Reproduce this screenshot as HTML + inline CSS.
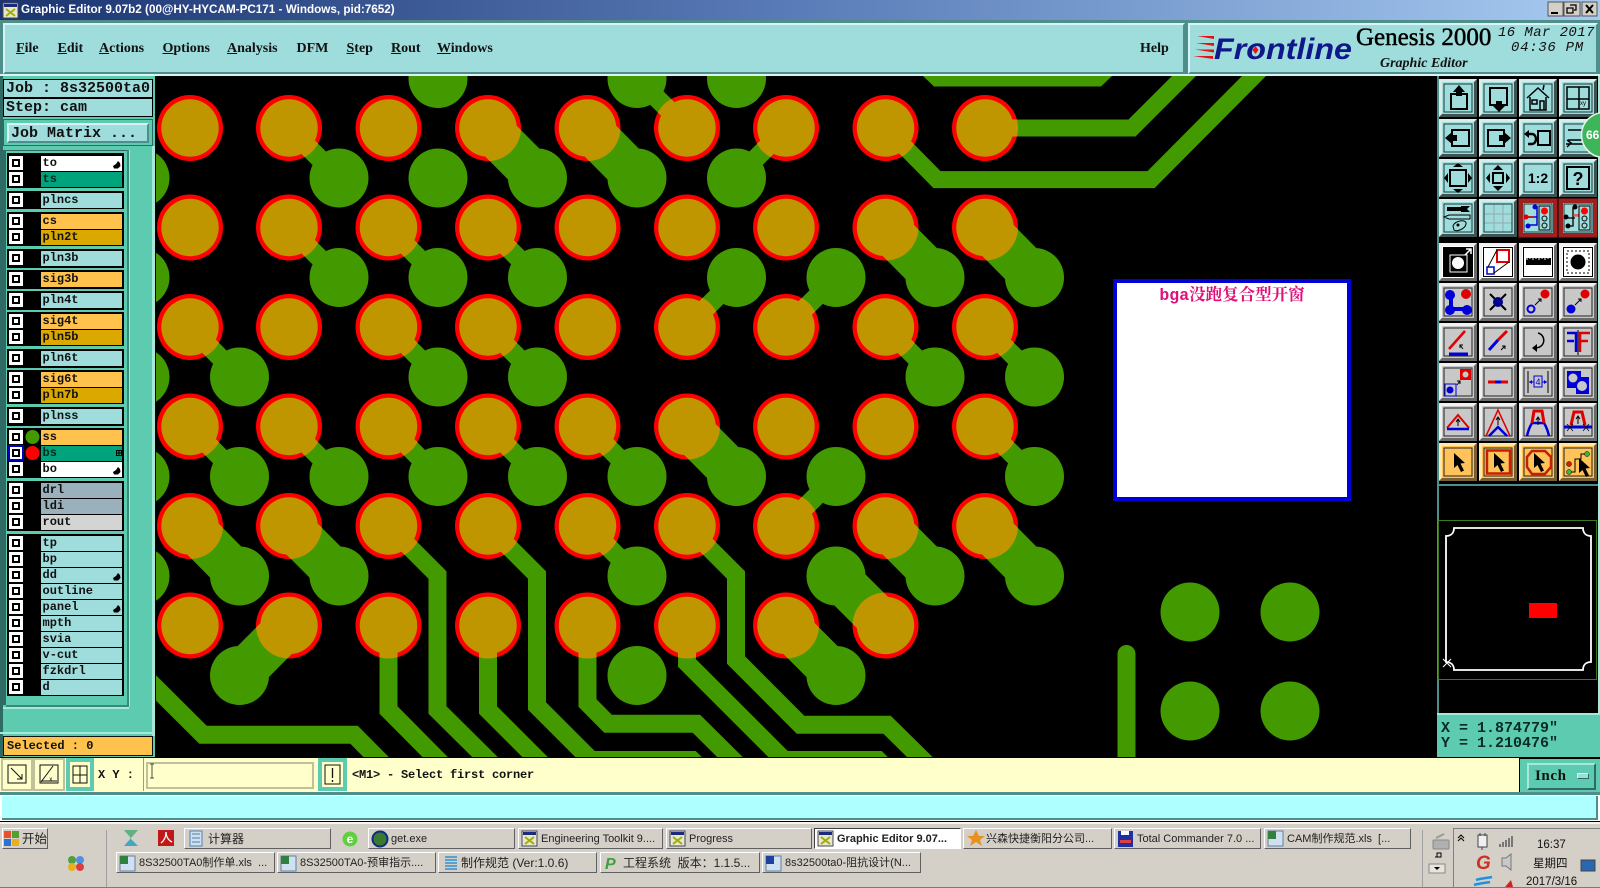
<!DOCTYPE html>
<html><head><meta charset="utf-8"><title>Graphic Editor</title>
<style>
html,body{margin:0;padding:0;width:1600px;height:887px;overflow:hidden;background:#4f8f8b}
*{box-sizing:border-box}
div,span{position:absolute}
u{text-decoration:underline}
.m{font:bold 14px "Liberation Serif","Noto Serif CJK SC",serif;color:#111;top:41px;white-space:pre}
.mono{font-family:"Liberation Mono","DejaVu Sans Mono",monospace;font-weight:bold;color:#111;white-space:pre}
.f{left:7px;width:117px;background:#000}
.l{left:41px;width:81px;height:14.5px;font:bold 12px/14px "Liberation Mono",monospace;color:#111;padding-left:1.5px;white-space:pre}
.cy{background:#9fdcdc}.or{background:#ffc24d}.go{background:#dba800}.gr{background:#00a37c;color:#022a20}.wh{background:#fff}.gb{background:#9ab0bc}.lg{background:#d4d4d4}
.c{left:9px;width:14px;height:14px;background:#fff}
.c i{position:absolute;display:block;left:3px;top:3px;width:8px;height:8px;background:#fff;box-shadow:0 0 0 0 #000;border:2px solid #000}
.t{height:21px;background:#d4d0c8;border:1px solid;border-color:#fff #606060 #606060 #fff;font:11px/20px "Liberation Sans","WenQuanYi Zen Hei","Noto Sans CJK SC",sans-serif;color:#222;white-space:pre;padding-left:22px;overflow:hidden}
.t2{font-size:12px}
.tr{font:11.5px "Liberation Sans","WenQuanYi Zen Hei",sans-serif;color:#111;white-space:pre}
</style></head><body>

<!-- PCB canvas -->
<div style="left:155px;top:76px;width:1282px;height:681px;background:#000"></div>
<svg width="1600" height="887" viewBox="0 0 1600 887" style="position:absolute;left:0;top:0">
<defs>
<clipPath id="cv"><rect x="156" y="76" width="1281" height="681"/></clipPath>
<g id="row33"><circle cx="190" r="33"/><circle cx="289" r="33"/><circle cx="388.5" r="33"/><circle cx="488" r="33"/><circle cx="587.5" r="33"/><circle cx="687" r="33"/><circle cx="786" r="33"/><circle cx="885.5" r="33"/></g>
<g id="row28"><circle cx="190" r="28.7"/><circle cx="289" r="28.7"/><circle cx="388.5" r="28.7"/><circle cx="488" r="28.7"/><circle cx="587.5" r="28.7"/><circle cx="687" r="28.7"/><circle cx="786" r="28.7"/><circle cx="885.5" r="28.7"/></g>
<g id="D33"><use href="#row33" y="128"/><use href="#row33" y="227.5"/><use href="#row33" y="327"/><use href="#row33" y="426.5"/><use href="#row33" y="526"/><use href="#row33" y="625.5"/><circle cx="985" cy="128" r="33"/><circle cx="985" cy="227.5" r="33"/><circle cx="985" cy="327" r="33"/><circle cx="985" cy="426.5" r="33"/><circle cx="985" cy="526" r="33"/></g>
<g id="D28"><use href="#row28" y="128"/><use href="#row28" y="227.5"/><use href="#row28" y="327"/><use href="#row28" y="426.5"/><use href="#row28" y="526"/><use href="#row28" y="625.5"/><circle cx="985" cy="128" r="28.7"/><circle cx="985" cy="227.5" r="28.7"/><circle cx="985" cy="327" r="28.7"/><circle cx="985" cy="426.5" r="28.7"/><circle cx="985" cy="526" r="28.7"/></g>
<circle id="p" r="29.5"/>
<g id="GP">
<use href="#p" x="438" y="78.5"/><use href="#p" x="637" y="78.5"/><use href="#p" x="736.5" y="78.5"/>
<use href="#p" x="140" y="178"/><use href="#p" x="339" y="178"/><use href="#p" x="438" y="178"/><use href="#p" x="537.5" y="178"/><use href="#p" x="637" y="178"/><use href="#p" x="736.5" y="178"/>
<use href="#p" x="140" y="277.5"/><use href="#p" x="339" y="277.5"/><use href="#p" x="438" y="277.5"/><use href="#p" x="537.5" y="277.5"/><use href="#p" x="736.5" y="277.5"/><use href="#p" x="836" y="277.5"/><use href="#p" x="935" y="277.5"/><use href="#p" x="1034.5" y="277.5"/>
<use href="#p" x="140" y="377"/><use href="#p" x="239.5" y="377"/><use href="#p" x="438" y="377"/><use href="#p" x="537.5" y="377"/><use href="#p" x="935" y="377"/><use href="#p" x="1034.5" y="377"/>
<use href="#p" x="140" y="476.5"/><use href="#p" x="239.5" y="476.5"/><use href="#p" x="339" y="476.5"/><use href="#p" x="438" y="476.5"/><use href="#p" x="537.5" y="476.5"/><use href="#p" x="637" y="476.5"/><use href="#p" x="736.5" y="476.5"/><use href="#p" x="836" y="476.5"/><use href="#p" x="1034.5" y="476.5"/>
<use href="#p" x="140" y="576"/><use href="#p" x="239.5" y="576"/><use href="#p" x="339" y="576"/><use href="#p" x="637" y="576"/><use href="#p" x="836" y="576"/><use href="#p" x="935" y="576"/><use href="#p" x="1034.5" y="576"/>
<use href="#p" x="239.5" y="675.5"/><use href="#p" x="637" y="675.5"/><use href="#p" x="836" y="675.5"/>
<use href="#p" x="1190" y="612"/><use href="#p" x="1290" y="612"/><use href="#p" x="1190" y="711"/><use href="#p" x="1290" y="711"/>
<polygon points="923,76 1112,76 1101,86.5 934,86.5"/>
</g>
<g id="GT" fill="none">
<path stroke-width="19" d="M289 128L339 178M786 128L736.5 178M687 128L637 78.5M388.5 227.5L438 277.5M488 227.5L537.5 277.5M289 227.5L339 277.5M190 327L239.5 377M388.5 327L438 377M488 327L537.5 377M687 327L736.5 277.5M786 327L836 277.5M885.5 327L935 377M985 327L1034.5 377M190 426.5L239.5 476.5M289 426.5L339 476.5M388.5 426.5L438 476.5M488 426.5L537.5 476.5M587.5 426.5L637 476.5M985 426.5L1034.5 476.5M587.5 526L637 576M786 526L836 476.5"/>
<path stroke-width="44" d="M488 128L537.5 178M587.5 128L637 178M885.5 227.5L935 277.5M985 227.5L1034.5 277.5M687 426.5L736.5 476.5M190 526L239.5 576M289 526L339 576M885.5 526L935 576M985 526L1034.5 576M289 625.5L239.5 675.5M786 625.5L836 675.5M885.5 625.5L836 576"/>
<path stroke-width="18" d="M150 682L203 734.7H354L382 763M388.5 625V710L445 767M488 625V710L545 767M388.5 526L437.5 575V710L495 767M488 526L537 575V706L591 760H692L712 780M587.5 625V703L608 723.7H696.4L745 772M687 625V663L784 760H878L895 777M687 526L736 575V660L800.5 724.7H887L935 772"/>
<path stroke-width="17" d="M886 128L937 179.6H1151L1260 70M985 128H1132L1190 70"/>
<path stroke-width="18" stroke-linecap="round" d="M1126.5 654V775"/>
</g>
<mask id="gm" maskUnits="userSpaceOnUse" x="0" y="0" width="1600" height="887"><use href="#GP" fill="#fff"/><use href="#GT" stroke="#fff"/></mask>
</defs>
<g clip-path="url(#cv)">
<use href="#D33" fill="#ff0000"/>
<use href="#GP" fill="#429900"/>
<use href="#GT" stroke="#429900"/>
<g mask="url(#gm)"><use href="#D33" fill="#bf9600"/></g>
<use href="#D28" fill="#bf9600"/>
</g>
</svg>

<!-- annotation box -->
<div style="left:1113px;top:279px;width:238px;height:222px;background:#fff;border:4px solid #0000d8"></div>
<div style="left:1113px;top:286px;width:238px;text-align:center;font:bold 16.5px/20px 'Liberation Mono','Noto Serif CJK SC',monospace;color:#e0107a">bga没跑复合型开窗</div>

<!-- title bar -->
<div style="left:0;top:0;width:1600px;height:20px;background:linear-gradient(90deg,#1b3470 0%,#5a7cb8 50%,#a6caf0 100%)"></div>
<div style="left:21px;top:1px;height:18px;font:bold 11.7px/18px 'Liberation Sans',sans-serif;color:#fff;white-space:pre">Graphic Editor 9.07b2 (00@HY-HYCAM-PC171 - Windows, pid:7652)</div>

<!-- menu bar -->
<div style="left:0;top:20px;width:1600px;height:56px;background:#4f8f8b"></div>
<div style="left:3px;top:23px;width:1182px;height:51px;background:#9fdcdc;border:2px solid;border-color:#d8f4f4 #4f8f8b #4f8f8b #d8f4f4"></div>
<div style="left:1188px;top:23px;width:410px;height:51px;background:#9fdcdc;border:2px solid;border-color:#d8f4f4 #4f8f8b #4f8f8b #d8f4f4"></div>
<div style="left:0;top:74px;width:1600px;height:2px;background:#d8f4f4"></div>
<div class="m" style="left:16px"><u>F</u>ile</div>
<div class="m" style="left:57.5px"><u>E</u>dit</div>
<div class="m" style="left:99px"><u>A</u>ctions</div>
<div class="m" style="left:162.5px"><u>O</u>ptions</div>
<div class="m" style="left:227px"><u>A</u>nalysis</div>
<div class="m" style="left:296.5px">DFM</div>
<div class="m" style="left:346.5px"><u>S</u>tep</div>
<div class="m" style="left:391px"><u>R</u>out</div>
<div class="m" style="left:437px"><u>W</u>indows</div>
<div class="m" style="left:1140px">Help</div>
<div style="left:1356px;top:23px;font:25px/30px 'Liberation Serif',serif;color:#000;white-space:pre;-webkit-text-stroke:.5px #000">Genesis 2000</div>
<div style="left:1380px;top:56px;font:italic bold 14px/16px 'Liberation Serif',serif;color:#111;white-space:pre">Graphic Editor</div>
<div class="mono" style="left:1498px;top:25px;font-size:14px;line-height:16px;font-style:italic;font-weight:normal;letter-spacing:.4px">16 Mar 2017</div>
<div class="mono" style="left:1511px;top:40px;font-size:14px;line-height:16px;font-style:italic;font-weight:normal;letter-spacing:.7px">04:36 PM</div>

<!-- left panel -->
<div style="left:0;top:76px;width:155px;height:681px;background:#5ccbb0"></div>
<div style="left:0;top:76px;width:3px;height:681px;background:#2d6b64"></div>
<div class="mono" style="left:3px;top:79px;width:150px;height:19px;background:#9fdcdc;border:1px solid #000;font-size:15px;line-height:17px;padding-left:2px">Job : 8s32500ta0</div>
<div class="mono" style="left:3px;top:98px;width:150px;height:19px;background:#9fdcdc;border:1px solid #000;font-size:15px;line-height:17px;padding-left:2px">Step: cam</div>
<div style="left:3px;top:119px;width:150px;height:27px;background:#5ccbb0;border:1px solid #2d6b64"></div>
<div class="mono" style="left:7px;top:123px;width:142px;height:20px;background:#9fdcdc;border:2px solid;border-color:#d8f4f4 #4f8f8b #4f8f8b #d8f4f4;font-size:15px;line-height:17px;padding-left:2px">Job Matrix ...</div>
<div style="left:3px;top:150px;width:3px;height:555px;background:#2d6b64"></div>
<div style="left:6px;top:150px;width:121px;height:1px;background:#2d6b64"></div>
<div style="left:126.5px;top:150px;width:2px;height:557px;background:#3a8a78"></div>
<div style="left:128.5px;top:150px;width:1.5px;height:557px;background:#a8e8d8"></div>
<div style="left:6px;top:705px;width:123px;height:2px;background:#3a8a78"></div>
<div style="left:3px;top:707px;width:126px;height:1.5px;background:#a8e8d8"></div>
<div style="left:152px;top:146px;width:3px;height:590px;background:#a8e8d8"></div>
<div style="left:0;top:732px;width:155px;height:2px;background:#a8e8d8"></div>

<div class="f" style="top:153px;height:35px"></div>
<div class="f" style="top:191px;height:18px"></div>
<div class="f" style="top:212px;height:34px"></div>
<div class="f" style="top:249px;height:18.5px"></div>
<div class="f" style="top:270px;height:18.5px"></div>
<div class="f" style="top:291px;height:18.5px"></div>
<div class="f" style="top:312px;height:34px"></div>
<div class="f" style="top:349px;height:18.5px"></div>
<div class="f" style="top:370px;height:34px"></div>
<div class="f" style="top:407px;height:18.5px"></div>
<div class="f" style="top:428px;height:50px"></div>
<div class="f" style="top:481px;height:50px"></div>
<div class="f" style="top:534px;height:162px"></div>

<div class="c" style="top:156px"><i></i></div><div class="l wh" style="top:156px">to</div>
<div class="c" style="top:172px"><i></i></div><div class="l gr" style="top:172px">ts</div>
<div class="c" style="top:193px"><i></i></div><div class="l cy" style="top:193px">plncs</div>
<div class="c" style="top:214px"><i></i></div><div class="l or" style="top:214px">cs</div>
<div class="c" style="top:230px"><i></i></div><div class="l go" style="top:230px">pln2t</div>
<div class="c" style="top:251px"><i></i></div><div class="l cy" style="top:251px">pln3b</div>
<div class="c" style="top:272px"><i></i></div><div class="l or" style="top:272px">sig3b</div>
<div class="c" style="top:293px"><i></i></div><div class="l cy" style="top:293px">pln4t</div>
<div class="c" style="top:314px"><i></i></div><div class="l or" style="top:314px">sig4t</div>
<div class="c" style="top:330px"><i></i></div><div class="l go" style="top:330px">pln5b</div>
<div class="c" style="top:351px"><i></i></div><div class="l cy" style="top:351px">pln6t</div>
<div class="c" style="top:372px"><i></i></div><div class="l or" style="top:372px">sig6t</div>
<div class="c" style="top:388px"><i></i></div><div class="l go" style="top:388px">pln7b</div>
<div class="c" style="top:409px"><i></i></div><div class="l cy" style="top:409px">plnss</div>
<div class="c" style="top:430px"><i></i></div><div class="l or" style="top:430px">ss</div>
<div class="c" style="top:446px;outline:2px solid #0000c0;outline-offset:-1px"><i></i></div><div class="l gr" style="top:446px">bs</div>
<div class="c" style="top:462px"><i></i></div><div class="l wh" style="top:462px">bo</div>
<div class="c" style="top:483px"><i></i></div><div class="l gb" style="top:483px">drl</div>
<div class="c" style="top:499px"><i></i></div><div class="l gb" style="top:499px">ldi</div>
<div class="c" style="top:515px"><i></i></div><div class="l lg" style="top:515px">rout</div>
<div class="c" style="top:536px"><i></i></div><div class="l cy" style="top:536px">tp</div>
<div class="c" style="top:552px"><i></i></div><div class="l cy" style="top:552px">bp</div>
<div class="c" style="top:568px"><i></i></div><div class="l cy" style="top:568px">dd</div>
<div class="c" style="top:584px"><i></i></div><div class="l cy" style="top:584px">outline</div>
<div class="c" style="top:600px"><i></i></div><div class="l cy" style="top:600px">panel</div>
<div class="c" style="top:616px"><i></i></div><div class="l cy" style="top:616px">mpth</div>
<div class="c" style="top:632px"><i></i></div><div class="l cy" style="top:632px">svia</div>
<div class="c" style="top:648px"><i></i></div><div class="l cy" style="top:648px">v-cut</div>
<div class="c" style="top:664px"><i></i></div><div class="l cy" style="top:664px">fzkdrl</div>
<div class="c" style="top:680px"><i></i></div><div class="l cy" style="top:680px">d</div>

<div class="mono" style="left:3px;top:736px;width:150px;height:20px;background:#ffc24d;border:1px solid #111;font-size:12px;line-height:18px;padding-left:3px">Selected : 0</div>

<!-- right column -->
<div style="left:1435px;top:76px;width:165px;height:681px;background:#000"></div>
<div style="left:1437px;top:76px;width:1.5px;height:640px;background:#4f8f8b"></div>
<div style="left:1598px;top:76px;width:2px;height:640px;background:#a8e8d8"></div>
<div style="left:1438px;top:484px;width:160px;height:1.5px;background:#4f8f8b"></div>
<div style="left:1438px;top:520px;width:159px;height:159.5px;border:1px solid #3d7a1c"></div>
<div style="left:1529px;top:603px;width:28px;height:15px;background:#ff0000"></div>
<div style="left:1437px;top:713px;width:163px;height:2px;background:#a8e8d8"></div>
<div class="mono" style="left:1437px;top:715px;width:163px;height:42px;background:#5ccbb0;font-size:15px;line-height:15px;padding:6px 0 0 4px;color:#0a2a24">X = 1.874779"
Y = 1.210476"</div>

<svg width="1600" height="887" viewBox="0 0 1600 887" style="position:absolute;left:0;top:0">
<defs>
<g id="bc"><rect width="38" height="38" fill="#7aa"/><polygon points="0,0 38,0 35,3 3,3 3,35 0,38" opacity=".75" fill="#fff"/><polygon points="38,38 0,38 3,35 35,35 35,3 38,0" fill="#000" opacity=".5"/><rect x="3" y="3" width="32" height="32" fill="#9fdcdc"/><rect x="5" y="5" width="28" height="28" fill="#9fdcdc" stroke="#1a3a3a"/></g>
<g id="bg"><rect width="38" height="38" fill="#8a8a8a"/><polygon points="0,0 38,0 35,3 3,3 3,35 0,38" fill="#f0f0f0"/><polygon points="38,38 0,38 3,35 35,35 35,3 38,0" fill="#6a6a6a"/><rect x="3" y="3" width="32" height="32" fill="#c8c8c8"/><rect x="5" y="5" width="28" height="28" fill="#c8c8c8" stroke="#222"/></g>
<g id="bw"><rect width="38" height="38" fill="#8a8a8a"/><polygon points="0,0 38,0 35,3 3,3 3,35 0,38" fill="#f0f0f0"/><polygon points="38,38 0,38 3,35 35,35 35,3 38,0" fill="#6a6a6a"/><rect x="3" y="3" width="32" height="32" fill="#fff"/></g>
<g id="bo"><rect width="38" height="38" fill="#8a6a30"/><polygon points="0,0 38,0 35,3 3,3 3,35 0,38" fill="#ffe8b0"/><polygon points="38,38 0,38 3,35 35,35 35,3 38,0" fill="#7a6030"/><rect x="3" y="3" width="32" height="32" fill="#ffc35a"/><rect x="5" y="5" width="28" height="28" fill="#ffc35a" stroke="#222"/></g>
<path id="ar" d="M0 0V15L3.5 12L7 19L10 17.5L6.5 10.5L11 10Z" fill="#000"/>
<path id="hd" d="M0 5L3 3L5 0L7 2L7.5 5L5 7.5L1 7.5Z" fill="#000"/>
<g id="wi"><rect width="15" height="15" fill="#e8e8d0" stroke="#445"/><rect x="1" y="1" width="13" height="3" fill="#1b2a7a"/><path d="M3 6L12 13M12 6L3 13" stroke="#a0b000" stroke-width="2"/></g>
</defs>

<!-- toolbar row 1-4 cyan -->
<g transform="translate(1439,79)"><use href="#bc"/><path d="M12 15H28V30H12Z" fill="none" stroke="#000" stroke-width="2"/><path d="M20 6L26 13H23V17H17V13H14Z" fill="#000"/></g>
<g transform="translate(1479,79)"><use href="#bc"/><path d="M11 9H28V26H11Z" fill="none" stroke="#000" stroke-width="2"/><path d="M20 33L14 27H17V22H23V27H26Z" fill="#000"/></g>
<g transform="translate(1519,79)"><use href="#bc"/><path d="M8 19L19 9L30 19M11 18V31H27V18M13 21H18V25H13ZM21 22H25V31H21ZM25 6L24 11" fill="none" stroke="#000" stroke-width="1.5"/></g>
<g transform="translate(1559,79)"><use href="#bc"/><path d="M8 8H30V30H8ZM8 20H30M20 8V30" fill="none" stroke="#000" stroke-width="1.5"/><text x="21" y="26" font-family="Liberation Sans" font-size="6">xy</text></g>
<g transform="translate(1439,119)"><use href="#bc"/><path d="M13 11H30V27H13Z" fill="none" stroke="#000" stroke-width="2"/><path d="M6 19L13 13V16H18V22H13V25Z" fill="#000"/></g>
<g transform="translate(1479,119)"><use href="#bc"/><path d="M9 11H25V27H9Z" fill="none" stroke="#000" stroke-width="2"/><path d="M32 19L25 13V16H20V22H25V25Z" fill="#000"/></g>
<g transform="translate(1519,119)"><use href="#bc"/><path d="M19 12H31V26H19Z" fill="none" stroke="#000" stroke-width="2"/><path d="M9 15H13A4 5 0 0 1 13 25H9" fill="none" stroke="#000" stroke-width="2.4"/><path d="M5 15L10 11V19Z" fill="#000"/></g>
<g transform="translate(1559,119)"><use href="#bc"/><path d="M9 11H30V21H9M7 25H30M8 21L12 24L8 28" fill="none" stroke="#000" stroke-width="1.5"/></g>
<g transform="translate(1439,159)"><use href="#bc"/><path d="M11 11H27V27H11Z" fill="none" stroke="#000" stroke-width="2"/><path d="M19 4L24 8H14ZM19 34L24 30H14ZM5 19L9 14V24ZM33 19L29 14V24Z" fill="#000"/></g>
<g transform="translate(1479,159)"><use href="#bc"/><path d="M14 14H24V24H14Z" fill="none" stroke="#000" stroke-width="2"/><path d="M19 6L24 11H14ZM19 32L24 27H14ZM7 19L11 14V24ZM31 19L27 14V24Z" fill="#000"/></g>
<g transform="translate(1519,159)"><use href="#bc"/><text x="19" y="24" text-anchor="middle" font-family="Liberation Sans" font-weight="bold" font-size="14">1:2</text></g>
<g transform="translate(1559,159)"><use href="#bc"/><path d="M8 8H30V30H8Z" fill="none" stroke="#000" stroke-width="2"/><text x="19" y="26" text-anchor="middle" font-family="Liberation Sans" font-weight="bold" font-size="18">?</text></g>
<g transform="translate(1439,199)"><use href="#bc"/><path d="M8 9H24M8 11H22" stroke="#000" stroke-width="2"/><path d="M22 7H31L28 10L31 13H22Z" fill="#000"/><path d="M10 16H31V20H10L5 18Z" fill="none" stroke="#000"/><path d="M14 27C16 21 28 20 27 25C26 30 18 33 15 31Z" fill="none" stroke="#000"/><circle cx="19" cy="26" r="1.5"/></g>
<g transform="translate(1479,199)"><use href="#bc"/><path d="M15 5.5V32.5M24 5.5V32.5M5.5 15H32.5M5.5 24H32.5" stroke="#9aa" stroke-width="1"/></g>
<g transform="translate(1519,199)"><use href="#bc"/><rect x="1" y="1" width="36" height="36" fill="none" stroke="#a02020" stroke-width="3"/><rect x="3" y="3" width="32" height="32" fill="none" stroke="#a02020" stroke-width="2"/><rect x="7" y="7" width="14" height="24" fill="#9fdcdc"/><path d="M9 18H18M18 7V18M18 18V26H10" fill="none" stroke="#0000e0" stroke-width="1.5"/><path d="M5 18H15" stroke="#e00000" stroke-width="1.5"/><circle cx="7" cy="18" r="2.5" fill="#e00000"/><circle cx="16" cy="8" r="2.5" fill="#0000e0"/><circle cx="9" cy="27" r="2.5" fill="#0000e0"/><rect x="20" y="7" width="11" height="24" fill="none" stroke="#000"/><circle cx="25.5" cy="12" r="3.5" fill="#f00"/><circle cx="25.5" cy="19.5" r="2.5" fill="none" stroke="#000"/><circle cx="25.5" cy="26.5" r="2.5" fill="none" stroke="#000"/></g>
<g transform="translate(1559,199)"><use href="#bc"/><rect x="1" y="1" width="36" height="36" fill="none" stroke="#a02020" stroke-width="3"/><rect x="3" y="3" width="32" height="32" fill="none" stroke="#a02020" stroke-width="2"/><path d="M7 19H16M14 8V27H8" fill="none" stroke="#000" stroke-width="1.3"/><circle cx="7" cy="18" r="2.5"/><circle cx="16" cy="8" r="2.5"/><circle cx="9" cy="27" r="2.5"/><path d="M14 16H20M15 15V18M17 15V18M19 15V18" stroke="#e04040"/><rect x="20" y="7" width="11" height="24" fill="none" stroke="#000"/><circle cx="25.5" cy="12" r="3.5" fill="#f00"/><circle cx="25.5" cy="19.5" r="2.5" fill="none" stroke="#000"/><circle cx="25.5" cy="26.5" r="2.5" fill="none" stroke="#000"/></g>

<!-- row 5 white -->
<g transform="translate(1439,243)"><use href="#bw"/><rect x="4" y="4" width="30" height="30" fill="#000"/><rect x="11" y="12" width="17" height="17" fill="none" stroke="#fff"/><circle cx="19" cy="20" r="6" fill="#fff"/><path d="M26 12L32 6M27 6H32V11" fill="none" stroke="#fff" stroke-width="1.5"/></g>
<g transform="translate(1479,243)"><use href="#bw"/><rect x="4.5" y="4.5" width="29" height="29" fill="none" stroke="#000"/><rect x="18" y="7" width="12" height="12" fill="none" stroke="#e00000" stroke-width="2"/><rect x="8" y="24" width="7" height="7" fill="none" stroke="#0000d0" stroke-width="1.5"/><path d="M9 24L18 7M15 30L30 19" stroke="#000"/></g>
<g transform="translate(1519,243)"><use href="#bw"/><rect x="4.5" y="4.5" width="29" height="29" fill="none" stroke="#000"/><rect x="7" y="15" width="25" height="7" fill="#000"/><path d="M8 14V17M11 14V16M14 14V17M17 14V16M20 14V17M23 14V16M26 14V17M29 14V16" stroke="#fff"/></g>
<g transform="translate(1559,243)"><use href="#bw"/><rect x="4.5" y="4.5" width="29" height="29" fill="none" stroke="#000"/><rect x="8" y="8" width="22" height="22" fill="none" stroke="#000" stroke-dasharray="2 2"/><circle cx="19" cy="19" r="7.5"/></g>

<!-- row 6 -->
<g transform="translate(1439,283)"><use href="#bg"/><path d="M12 10V26H26" stroke="#0000d8" stroke-width="4" fill="none"/><circle cx="11" cy="12" r="5" fill="#0000d8"/><circle cx="11" cy="27" r="5" fill="#0000d8"/><circle cx="28" cy="27" r="5" fill="#0000d8"/><circle cx="27" cy="11" r="5" fill="#e00000"/></g>
<g transform="translate(1479,283)"><use href="#bg"/><path d="M11 11L27 27M27 11L11 27" stroke="#000" stroke-width="2"/><circle cx="19" cy="19" r="5" fill="#00008a"/></g>
<g transform="translate(1519,283)"><use href="#bg"/><circle cx="12" cy="26" r="3.5" fill="none" stroke="#0000d8" stroke-width="2"/><circle cx="26" cy="11" r="4.5" fill="#e00000"/><path d="M16 22L22 16M19 16H22V19" fill="none" stroke="#000"/></g>
<g transform="translate(1559,283)"><use href="#bg"/><circle cx="12" cy="26" r="4.5" fill="#0000d8"/><circle cx="26" cy="11" r="4.5" fill="#e00000"/><path d="M16 22L22 16M19 16H22V19" fill="none" stroke="#000"/></g>

<!-- row 7 -->
<g transform="translate(1439,323)"><use href="#bg"/><path d="M10 26L26 8" stroke="#e00000" stroke-width="2.5"/><path d="M10 31H29" stroke="#0000d8" stroke-width="3"/><path d="M24 26L21 22M21 25V22H24" fill="none" stroke="#000"/></g>
<g transform="translate(1479,323)"><use href="#bg"/><path d="M19 17L28 8" stroke="#e00000" stroke-width="3"/><path d="M10 27L19 17" stroke="#0000d8" stroke-width="3"/><path d="M22 27L26 23M23 23H26V26" fill="none" stroke="#000"/></g>
<g transform="translate(1519,323)"><use href="#bg"/><path d="M19 10C27 12 27 24 17 25" fill="none" stroke="#000" stroke-width="1.5"/><path d="M13 25L18 21V29Z"/></g>
<g transform="translate(1559,323)"><use href="#bg"/><path d="M8 10H17V29M8 18H15" fill="none" stroke="#0000d8" stroke-width="2.5"/><path d="M19 7V32" stroke="#000"/><path d="M21 29V10H31M21 18H29" fill="none" stroke="#e00000" stroke-width="2.5"/></g>

<!-- row 8 -->
<g transform="translate(1439,363)"><use href="#bg"/><rect x="21" y="6" width="11" height="11" fill="#e00000"/><circle cx="26.5" cy="11.5" r="3" fill="#c8c8c8"/><rect x="6" y="21" width="11" height="12" fill="none" stroke="#0000d8"/><circle cx="11" cy="27" r="3.5" fill="#0000d8"/><path d="M18 22L21 18M18 18H21V21" fill="none" stroke="#000"/></g>
<g transform="translate(1479,363)"><use href="#bg"/><path d="M9 19H29" stroke="#e00000" stroke-width="3"/><path d="M16 19H22" stroke="#0000d8" stroke-width="3"/></g>
<g transform="translate(1519,363)"><use href="#bg"/><path d="M9 8V30M29 8V30" stroke="#000"/><path d="M10 19H28" stroke="#0000d8"/><rect x="15" y="13" width="8" height="11" fill="#c8c8c8" stroke="#0000d8"/><text x="19" y="22" text-anchor="middle" font-size="9" fill="#0000d8" font-family="Liberation Sans">4</text><path d="M10 19L13 17V21ZM28 19L25 17V21Z" fill="#0000d8"/></g>
<g transform="translate(1559,363)"><use href="#bg"/><path d="M8 8H22V14H30V31H17V25H8Z" fill="#0000d8"/><circle cx="14" cy="15" r="4.5" fill="#c8c8c8"/><circle cx="23" cy="23" r="5" fill="#c8c8c8"/></g>

<!-- row 9 -->
<g transform="translate(1439,403)"><use href="#bg"/><path d="M8 25L19 12L30 25" fill="none" stroke="#e00000" stroke-width="2"/><path d="M8 26H30" stroke="#0000d8" stroke-width="2.5"/><path d="M19 23V17M17 19L19 16L21 19" fill="none" stroke="#000"/></g>
<g transform="translate(1479,403)"><use href="#bg"/><path d="M7 33L19 7L31 33" fill="none" stroke="#e00000" stroke-width="1.5"/><path d="M10 33L19 24L28 33" fill="none" stroke="#0000d8" stroke-width="2.5"/><path d="M19 22V15M17 17L19 14L21 17" fill="none" stroke="#000"/></g>
<g transform="translate(1519,403)"><use href="#bg"/><path d="M8 33C10 24 12 22 13 20H25C26 22 28 24 30 33" fill="none" stroke="#0000d8" stroke-width="2.5"/><path d="M13 20L15 8H23L25 20" fill="none" stroke="#e00000" stroke-width="3"/><path d="M19 22V15M17 17L19 14L21 17" fill="none" stroke="#000"/></g>
<g transform="translate(1559,403)"><use href="#bg"/><path d="M5 24H33" stroke="#0000d8" stroke-width="3"/><path d="M12 22L15 9H23L26 22" fill="none" stroke="#e00000" stroke-width="3"/><path d="M8 21L14 28M14 21L8 28M24 21L30 28M30 21L24 28" stroke="#000" stroke-width=".7"/><path d="M19 21V14M17 16L19 13L21 16" fill="none" stroke="#000"/></g>

<!-- row 10 orange -->
<g transform="translate(1439,443)"><use href="#bo"/><use href="#ar" x="15" y="10"/></g>
<g transform="translate(1479,443)"><use href="#bo"/><rect x="8" y="7.5" width="23" height="23" fill="none" stroke="#c81e00" stroke-width="2.5"/><use href="#ar" x="15" y="10"/></g>
<g transform="translate(1519,443)"><use href="#bo"/><path d="M13 8H26L32 14V24L26 31H13L8 24V14Z" fill="none" stroke="#c81e00" stroke-width="2.5"/><use href="#ar" x="15" y="10"/></g>
<g transform="translate(1559,443)"><use href="#bo"/><path d="M10 29H16V16H22V11H28" fill="none" stroke="#000"/><circle cx="10" cy="29" r="2.5" fill="#3fb540" stroke="#000" stroke-width=".5"/><circle cx="10" cy="21" r="2.5" fill="#d02000" stroke="#000" stroke-width=".5"/><circle cx="28" cy="11" r="2.5" fill="#3fb540" stroke="#000" stroke-width=".5"/><use href="#ar" x="20" y="15"/></g>

<!-- green bubble -->
<circle cx="1604" cy="135" r="22.5" fill="#3fb55a" stroke="#e8f4e8" stroke-width="1.5"/>
<text x="1586" y="139" font-family="Liberation Sans" font-weight="bold" font-size="12" fill="#fff">66</text>

<!-- mini map -->
<path d="M1454 528H1583C1583 533 1586 536 1591 536V662C1586 662 1583 665 1583 670H1454C1454 665 1451 662 1446 662V536C1451 536 1454 533 1454 528Z" fill="none" stroke="#fff" stroke-width="1.8"/>
<path d="M1443 659L1451 667M1451 659L1443 667" stroke="#fff"/>

<!-- title icon + window buttons -->
<use href="#wi" x="3" y="3"/>
<g transform="translate(1548,2)"><rect width="15" height="14" fill="#d4d0c8" stroke="#555"/><path d="M3 11H10" stroke="#000" stroke-width="2"/></g>
<g transform="translate(1564,2)"><rect width="16" height="14" fill="#d4d0c8" stroke="#555"/><path d="M6 3H12V8H10M3 6H9V11H3Z" fill="none" stroke="#000" stroke-width="1.3"/></g>
<g transform="translate(1582,2)"><rect width="15" height="14" fill="#d4d0c8" stroke="#555"/><path d="M4 3L11 11M11 3L4 11" stroke="#000" stroke-width="2"/></g>

<!-- logo -->
<path d="M1197 36H1214V39ZM1196 43H1214V46ZM1195 49.5H1214V52.5ZM1193 56H1213V59Z" fill="#e81010"/>
<text x="1214" y="59" font-family="Liberation Sans" font-weight="bold" font-style="italic" font-size="30" fill="#10178a" textLength="138" lengthAdjust="spacingAndGlyphs">Frontline</text>
<path d="M1255.5 46L1258.5 50L1255.5 54L1252.5 50Z" fill="#e81010"/>
</svg>

<!-- layer small icons -->
<svg width="160" height="720" viewBox="0 0 160 720" style="position:absolute;left:0;top:0">
<use href="#hd" x="113" y="161"/><use href="#hd" x="113" y="467"/><use href="#hd" x="113" y="573"/><use href="#hd" x="113" y="605"/>
<rect x="116.5" y="450.5" width="5" height="5" fill="none" stroke="#000"/><path d="M119 450.5V455.5M116.5 453H121.5" stroke="#000"/>
<circle cx="32.5" cy="437" r="7" fill="#429900"/>
<circle cx="32.5" cy="453" r="7" fill="#ff0000"/>
</svg>

<!-- command row -->
<div style="left:0;top:757px;width:1600px;height:1.5px;background:#000"></div>
<div style="left:0;top:758px;width:1520px;height:34px;background:#ffffcc"></div>
<div style="left:1519px;top:758px;width:81px;height:34px;background:#000"></div>
<div style="left:1520px;top:759px;width:80px;height:33px;background:#5ccbb0"></div>
<div class="mono" style="left:1527px;top:763px;width:69px;height:27px;background:#5ccbb0;border:2px solid;border-color:#a8e8d8 #2d6b64 #2d6b64 #a8e8d8;font:bold 15px/23px 'Liberation Serif',serif;padding-left:6px;letter-spacing:.6px">Inch</div>
<div style="left:1577px;top:773px;width:12px;height:6px;background:#9fdcdc;border:1px solid;border-color:#d8f4f4 #2d6b64 #2d6b64 #d8f4f4"></div>
<div style="left:66px;top:758px;width:28px;height:33px;background:#5ccbb0"></div>
<div style="left:318px;top:758px;width:29px;height:33px;background:#5ccbb0"></div>
<div style="left:143px;top:758px;width:173px;height:33px;background:#ffffcc;border-left:1px solid #999"></div>
<div style="left:146px;top:762px;width:168px;height:27px;background:#ffffcc;border:2px solid #c0c09a"></div>
<div class="mono" style="left:98px;top:767px;font-size:12px;line-height:16px">X Y :</div>
<div class="mono" style="left:352px;top:767px;font-size:12px;line-height:16px;letter-spacing:-.2px">&lt;M1&gt; - Select first corner</div>
<svg width="360" height="40" viewBox="0 758 360 40" style="position:absolute;left:0;top:758px">
<rect x="2" y="759" width="30" height="31" fill="none" stroke="#c0c09a" stroke-width="2"/>
<rect x="8" y="765" width="18" height="18" fill="none" stroke="#111"/><path d="M11 768L22 779M22 774V779H17" fill="none" stroke="#111"/>
<rect x="34" y="759" width="30" height="31" fill="none" stroke="#c0c09a" stroke-width="2"/>
<rect x="40" y="765" width="18" height="18" fill="none" stroke="#111"/><path d="M41 782L53 766M41 781H57" fill="none" stroke="#111"/><text x="49" y="781" font-size="6" font-family="Liberation Mono">x</text>
<rect x="70" y="762" width="20" height="25" fill="#ffffcc"/><rect x="73" y="766" width="14" height="17" fill="none" stroke="#111"/><path d="M73 775H87M80 766V783" stroke="#111"/>
<rect x="322" y="762" width="21" height="25" fill="#ffffcc"/><rect x="325" y="765" width="15" height="19" fill="none" stroke="#111"/><path d="M332.5 768V778M332.5 780V782" stroke="#111" stroke-width="1.3"/>
<path d="M150 764H154M152 764V778M150 778H154" stroke="#222" stroke-width=".8"/>
</svg>
<div style="left:0;top:792px;width:1600px;height:3px;background:#4f8f8b"></div>
<div style="left:0;top:795px;width:1600px;height:27px;background:#fff"></div>
<div style="left:2px;top:796px;width:1596px;height:24px;background:#aeffff;border-bottom:2px solid #4f8f8b;border-right:2px solid #4f8f8b"></div>
<div style="left:0;top:820.5px;width:1600px;height:1.2px;background:#000"></div>

<!-- taskbar -->
<div style="left:0;top:822px;width:1600px;height:65px;background:#d4d0c8;border-top:2px solid #f4f4f0"></div>
<div class="t" style="left:2px;top:828px;width:46px;padding-left:19px;font-size:12.5px">开始</div>
<div style="left:105.5px;top:830px;width:1.5px;height:57px;background:#fff;border-left:1px solid #a0a0a0"></div>
<div class="t t2" style="left:184px;top:828px;width:147px;padding-left:23px">计算器</div>
<div class="t" style="left:368px;top:828px;width:147px">get.exe</div>
<div class="t" style="left:518px;top:828px;width:145px">Engineering Toolkit 9....</div>
<div class="t" style="left:666px;top:828px;width:146px">Progress</div>
<div class="t" style="left:814px;top:828px;width:147px;background:#fff;border-color:#404040 #fff #fff #404040;font-weight:bold">Graphic Editor 9.07...</div>
<div class="t" style="left:963px;top:828px;width:149px">兴森快捷衡阳分公司...</div>
<div class="t" style="left:1114px;top:828px;width:147px">Total Commander 7.0 ...</div>
<div class="t" style="left:1264px;top:828px;width:147px">CAM制作规范.xls  [...</div>
<div class="t" style="left:116px;top:852px;width:159px">8S32500TA0制作单.xls  ...</div>
<div class="t" style="left:277px;top:852px;width:159px">8S32500TA0-预审指示....</div>
<div class="t t2" style="left:438px;top:852px;width:159px">制作规范 (Ver:1.0.6)</div>
<div class="t" style="left:600px;top:852px;width:160px;font-size:12px">工程系统  版本：1.1.5...</div>
<div class="t" style="left:762px;top:852px;width:159px">8s32500ta0-阻抗设计(N...</div>
<div style="left:1421.5px;top:830px;width:1.5px;height:57px;background:#fff;border-left:1px solid #a0a0a0"></div>
<div style="left:1453px;top:828px;width:147px;height:59px;border-top:1px solid #808080;border-left:1px solid #808080"></div>
<div class="tr" style="left:1537px;top:839px">16:37</div>
<div class="tr" style="left:1533px;top:855px">星期四</div>
<div class="tr" style="left:1526px;top:876px">2017/3/16</div>

<svg width="1600" height="65" viewBox="0 822 1600 65" style="position:absolute;left:0;top:822px">
<rect x="4" y="831" width="7" height="7" fill="#e85030"/><rect x="12" y="831" width="7" height="7" fill="#50a030"/><rect x="4" y="839" width="7" height="7" fill="#3070d0"/><rect x="12" y="839" width="7" height="7" fill="#e8b020"/>
<path d="M124 830H138L130 838L138 846H124L131 838Z" fill="#40a8c0"/><path d="M124 830H138L131 838Z" fill="#60b080"/>
<rect x="158" y="830" width="16" height="16" fill="#c01818"/><path d="M161 843C165 840 166 835 166 832C166 836 168 840 172 842" fill="none" stroke="#fff" stroke-width="1.3"/>
<rect x="190" y="831" width="12" height="15" fill="#cfe0f0" stroke="#5080b0"/><path d="M192 834H200M192 838H200M192 842H200" stroke="#5080b0"/>
<circle cx="350" cy="839" r="7.5" fill="#60d040"/><text x="350" y="843" text-anchor="middle" font-size="12" font-family="Liberation Sans" font-weight="bold" fill="#fff">e</text>
<circle cx="380" cy="839" r="7.5" fill="#3a7a30" stroke="#102a80" stroke-width="2"/>
<use href="#wi" x="522" y="831"/><use href="#wi" x="670" y="831"/><use href="#wi" x="818" y="831"/>
<path d="M976 830L979 836H985L980 840L982 846L976 842L970 846L972 840L967 836H973Z" fill="#e89020"/>
<rect x="1118" y="831" width="15" height="16" fill="#2030a0"/><rect x="1120" y="840" width="11" height="3" fill="#e04040"/><rect x="1121" y="831" width="8" height="4" fill="#fff"/>
<rect x="1268" y="831" width="15" height="15" fill="#cfe0f0" stroke="#6080a0"/><rect x="1268" y="831" width="8" height="8" fill="#308040"/>
<rect x="120" y="856" width="15" height="15" fill="#cfe0f0" stroke="#6080a0"/><rect x="120" y="856" width="8" height="8" fill="#308040"/>
<rect x="281" y="856" width="15" height="15" fill="#cfe0f0" stroke="#6080a0"/><rect x="281" y="856" width="8" height="8" fill="#308040"/>
<path d="M445 857H457M445 860H457M445 863H457M445 866H457M445 869H457" stroke="#3090d0" stroke-width="1.5"/>
<text x="605" y="869" font-family="Liberation Sans" font-weight="bold" font-style="italic" font-size="16" fill="#40a040">P</text>
<rect x="766" y="856" width="15" height="15" fill="#cfe0f0" stroke="#6080a0"/><rect x="766" y="856" width="8" height="8" fill="#2040a0"/>
<circle cx="72" cy="860" r="4" fill="#50a040"/><circle cx="80" cy="860" r="4" fill="#5090e0"/><circle cx="72" cy="867" r="4" fill="#e8b020"/><circle cx="80" cy="867" r="4" fill="#d84040"/>
<rect x="1433" y="840" width="16" height="9" rx="1" fill="#b0b0b0" stroke="#888"/><path d="M1436 838L1444 834" stroke="#999" stroke-width="2"/>
<path d="M1435 857H1441V853H1437V857" fill="none" stroke="#000" stroke-width="1"/><rect x="1429" y="864" width="16" height="9" fill="#e8e4dc" stroke="#888"/><path d="M1434 867H1440L1437 870Z"/>
<path d="M1458 838L1461 835L1464 838M1458 841L1461 838L1464 841" fill="none" stroke="#000"/>
<rect x="1478" y="835" width="9" height="12" fill="#f0f0f0" stroke="#444"/><path d="M1480 833V836M1485 833V836M1482 847V850" stroke="#444"/>
<path d="M1500 847V844M1503 847V842M1506 847V840M1509 847V838M1512 847V836" stroke="#777" stroke-width="2"/>
<text x="1476" y="869" font-family="Liberation Sans" font-weight="bold" font-style="italic" font-size="19" fill="#d03020">G</text>
<path d="M1502 858H1506L1511 854V870L1506 866H1502Z" fill="#c8c8c8" stroke="#777"/>
<rect x="1581" y="860" width="14" height="11" fill="#2868b0" stroke="#444"/>
<path d="M1476 880C1482 878 1488 878 1492 877M1474 885C1480 883 1486 883 1490 882" stroke="#2090e0" stroke-width="2.5" fill="none"/>
<path d="M1505 887L1511 880L1513 887" fill="#d02020"/>
</svg>
</body></html>
